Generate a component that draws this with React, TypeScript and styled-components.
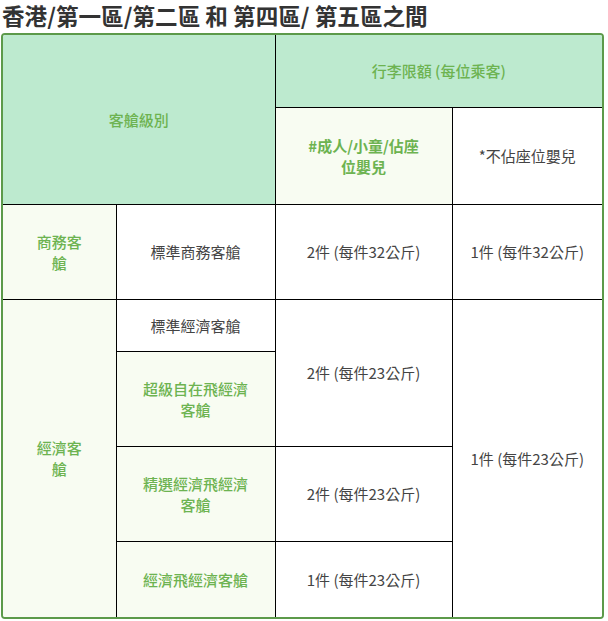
import React from "react";
import styled, { createGlobalStyle } from "styled-components";

const GlobalStyle = createGlobalStyle`
  html, body {
    margin: 0;
    padding: 0;
    background: #ffffff;
  }
  body {
    font-family: "Noto Sans CJK TC", "Noto Sans", sans-serif;
    color: #333333;
  }
`;

const Page = styled.div`
  width: 608px;
  padding: 1px 4px 0 1px;
  box-sizing: border-box;
`;

const Title = styled.h2`
  margin: 0 0 2px 1px;
  font-size: 22.6px;
  line-height: 30px;
  font-weight: 700;
  color: #333333;
`;

const Frame = styled.div`
  border: 2px solid #5c9a4a;
  border-radius: 4px;
  overflow: hidden;
`;

const Table = styled.table`
  width: 100%;
  border-collapse: collapse;
  border-style: hidden;
  table-layout: fixed;
  font-size: 15px;
  line-height: 21px;
`;

type Tone = "head" | "soft" | "plain";

const toneBg: Record<Tone, string> = {
  head: "#bdeacf",
  soft: "#f8fcf2",
  plain: "#ffffff",
};

const Cell = styled.td<{ $tone?: Tone; $green?: boolean; $bold?: boolean; $pad?: number }>`
  border: 1px solid #000000;
  background: ${(p) => toneBg[p.$tone ?? "plain"]};
  color: ${(p) => (p.$green ? "#6db351" : "#444444")};
  font-weight: ${(p) => (p.$bold ? 700 : p.$green ? 500 : 400)};
  padding: 0 ${(p) => p.$pad ?? 12}px;
  text-align: center;
  vertical-align: middle;
  box-sizing: border-box;
`;

const Row = styled.tr<{ $h: number }>`
  height: ${(p) => p.$h}px;
`;

export default function App() {
  return (
    <>
      <GlobalStyle />
      <Page>
        <Title>香港/第一區/第二區 和 第四區/ 第五區之間</Title>
        <Frame>
          <Table>
            <colgroup>
              <col style={{ width: 113 }} />
              <col style={{ width: 159 }} />
              <col style={{ width: 177 }} />
              <col />
            </colgroup>
            <tbody>
              <Row $h={72}>
                <Cell colSpan={2} rowSpan={2} $tone="head" $green>
                  客艙級別
                </Cell>
                <Cell colSpan={2} $tone="head" $green>
                  行李限額 (每位乘客)
                </Cell>
              </Row>
              <Row $h={97}>
                <Cell $tone="soft" $green $bold $pad={30}>
                  #成人/小童/佔座位嬰兒
                </Cell>
                <Cell>*不佔座位嬰兒</Cell>
              </Row>
              <Row $h={95}>
                <Cell $tone="soft" $green $pad={30}>
                  商務客艙
                </Cell>
                <Cell $pad={24}>標準商務客艙</Cell>
                <Cell>2件 (每件32公斤)</Cell>
                <Cell>1件 (每件32公斤)</Cell>
              </Row>
              <Row $h={52}>
                <Cell rowSpan={4} $tone="soft" $green $pad={30}>
                  經濟客艙
                </Cell>
                <Cell $pad={24}>標準經濟客艙</Cell>
                <Cell rowSpan={2}>2件 (每件23公斤)</Cell>
                <Cell rowSpan={4}>1件 (每件23公斤)</Cell>
              </Row>
              <Row $h={95}>
                <Cell $tone="soft" $green $pad={24}>
                  超級自在飛經濟客艙
                </Cell>
              </Row>
              <Row $h={95}>
                <Cell $tone="soft" $green $pad={24}>
                  精選經濟飛經濟客艙
                </Cell>
                <Cell>2件 (每件23公斤)</Cell>
              </Row>
              <Row $h={76}>
                <Cell $tone="soft" $green $pad={24}>
                  經濟飛經濟客艙
                </Cell>
                <Cell>1件 (每件23公斤)</Cell>
              </Row>
            </tbody>
          </Table>
        </Frame>
      </Page>
    </>
  );
}
